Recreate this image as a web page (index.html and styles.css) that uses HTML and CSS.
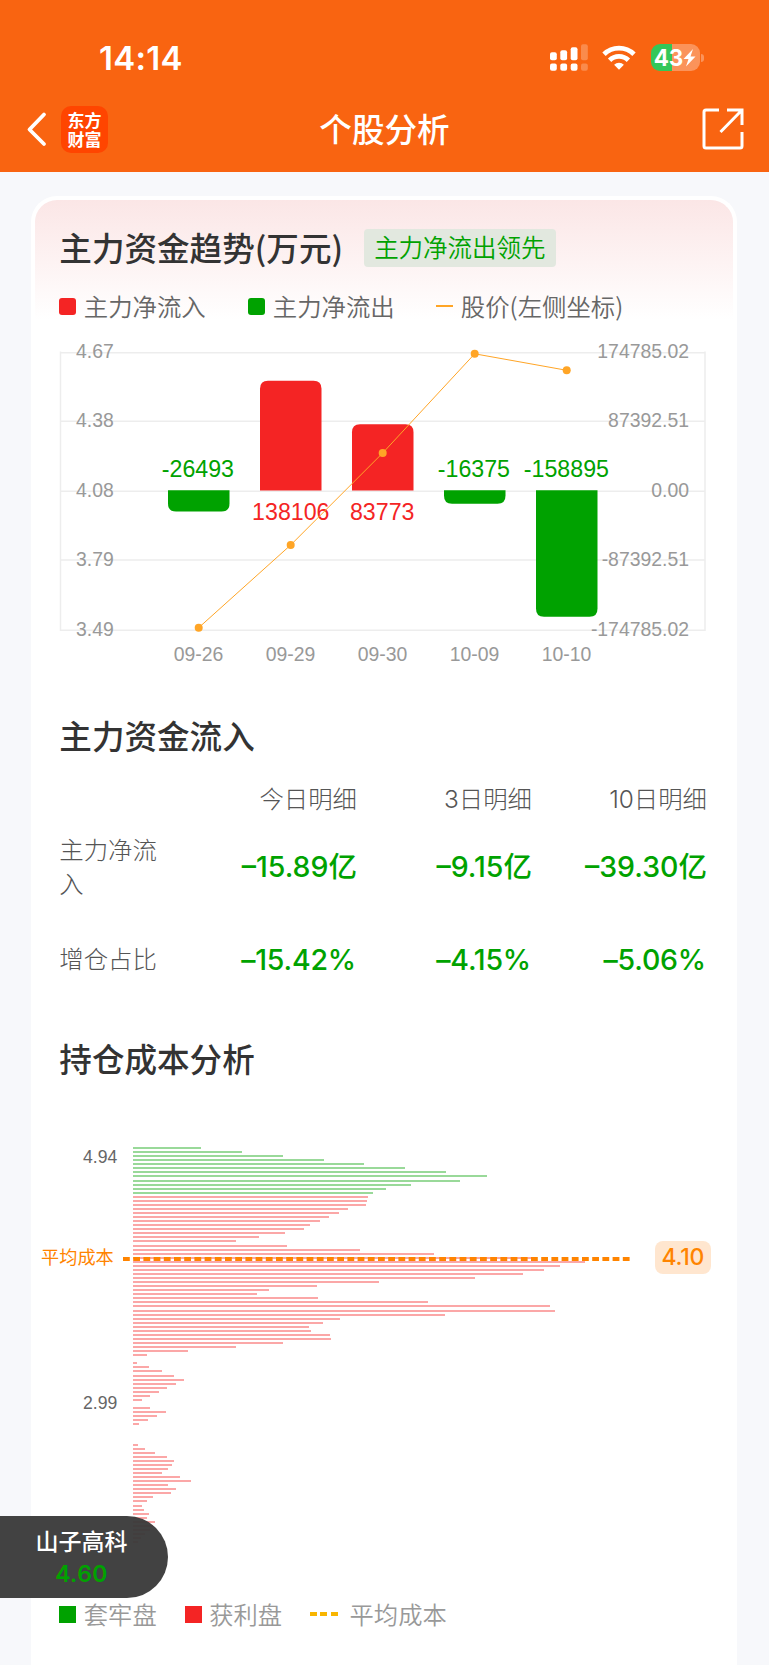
FILE: index.html
```
<!DOCTYPE html>
<html lang="zh-CN">
<head>
    <meta charset="UTF-8">
    <meta name="viewport" content="width=device-width, initial-scale=1.0">
    <title>个股分析</title>
    <link rel="stylesheet" href="styles.css">
</head>
<body>
    <header class="header">
        <div class="status-bar">
            <div class="time">14:14</div>
            <div class="status-icons">
                <svg class="signal" width="39" height="28" viewBox="0 0 39 28" fill="#fff">
                    <rect x="0" y="8.3" width="6.8" height="8" rx="2"/>
                    <rect x="10.3" y="6.3" width="6.8" height="10" rx="2"/>
                    <rect x="20.7" y="3.3" width="6.8" height="13" rx="2"/>
                    <rect x="31" y="0.3" width="6.8" height="16" rx="2" opacity=".25"/>
                    <rect x="0" y="19.5" width="6.8" height="7.3" rx="2"/>
                    <rect x="10.3" y="19.5" width="6.8" height="7.3" rx="2"/>
                    <rect x="20.7" y="19.5" width="6.8" height="7.3" rx="2"/>
                    <rect x="31" y="19.5" width="6.8" height="7.3" rx="2" opacity=".25"/>
                </svg>
                <svg class="wifi" width="34" height="28" viewBox="0 0 34 28" fill="none" stroke="#fff" stroke-width="4.8">
                    <path d="M2 10.2a21.4 21.4 0 0 1 30 0"/>
                    <path d="M7.6 16.2a13.4 13.4 0 0 1 18.8 0"/>
                    <path d="M17 25.8l-4.9-5a7 7 0 0 1 9.8 0z" fill="#fff" stroke="none"/>
                </svg>
                <div class="battery">
                    <span>43</span>
                    <svg width="13" height="18" viewBox="0 0 13 18" fill="#fff">
                        <path d="M10 0L0.5 10h5L3 17.5 12.5 7.5h-5z"/>
                    </svg>
                </div>
                <i class="battery-tip"></i>
            </div>
        </div>
        <div class="nav">
            <div class="nav-left">
                <svg width="22" height="36" viewBox="0 0 22 36" fill="none" stroke="#fff" stroke-width="3.8" stroke-linecap="round" stroke-linejoin="round">
                    <path d="M18 3.5L3.5 18.5l14.5 14.5"/>
                </svg>
                <div class="app-logo">
                    <span>东方</span>
                    <span>财富</span>
                </div>
            </div>
            <h1>个股分析</h1>
            <svg class="share" width="42" height="42" viewBox="0 0 42 42" fill="none" stroke="#fff" stroke-width="3">
                <path d="M17 2H4Q2 2 2 4v34q0 2 2 2h34q2 0 2-2V24"/>
                <path d="M25 2h15v15M39.5 2.5L18.5 24"/>
            </svg>
        </div>
    </header>

    <main class="card">
        <section class="trend">
            <div class="title-row">
                <h2>主力资金趋势(万元)</h2>
                <span class="tag">主力净流出领先</span>
            </div>
            <div class="legend">
                <span class="legend-item in"><i class="dot red"></i>主力净流入</span>
                <span class="legend-item out"><i class="dot green"></i>主力净流出</span>
                <span class="legend-item"><i class="dash"></i>股价(左侧坐标)</span>
            </div>
            <svg class="trend-chart" width="706" height="345" viewBox="0 0 706 345">
                <g class="grid">
                    <path d="M29 22.8H674M29 91.3H674M29 161.3H674M29 230.1H674M29 300.2H674"/>
                    <path d="M29.5 21.5V301M674 21.5V301"/>
                </g>
                <g class="up">
                    <path d="M229 160.5V58.7q0-8 8-8h45.5q8 0 8 8v101.8z"/>
                    <path d="M321 160.5V102.2q0-8 8-8h45.5q8 0 8 8v58.3z"/>
                </g>
                <g class="down">
                    <path d="M137 160.3v13.2q0 8 8 8h45.5q8 0 8-8v-13.2z"/>
                    <path d="M413 160.3v5.4q0 8 8 8h45.5q8 0 8-8v-5.4z"/>
                    <path d="M505 160.3v118.4q0 8 8 8h45.5q8 0 8-8V160.3z"/>
                </g>
                <g class="value down">
                    <text x="166.9" y="147.4">-26493</text>
                    <text x="442.9" y="147.4">-16375</text>
                    <text x="535.4" y="147.4">-158895</text>
                </g>
                <g class="value up">
                    <text x="259.8" y="190">138106</text>
                    <text x="351.2" y="190">83773</text>
                </g>
                <g class="axis">
                    <text x="45" y="27.6">4.67</text>
                    <text x="45" y="97">4.38</text>
                    <text x="45" y="166.6">4.08</text>
                    <text x="45" y="236.2">3.79</text>
                    <text x="45" y="305.6">3.49</text>
                </g>
                <g class="axis right">
                    <text x="658" y="27.6">174785.02</text>
                    <text x="658" y="97">87392.51</text>
                    <text x="658" y="166.6">0.00</text>
                    <text x="658" y="236.2">-87392.51</text>
                    <text x="658" y="305.6">-174785.02</text>
                </g>
                <g class="axis date">
                    <text x="167.5" y="331.4">09-26</text>
                    <text x="259.5" y="331.4">09-29</text>
                    <text x="351.5" y="331.4">09-30</text>
                    <text x="443.5" y="331.4">10-09</text>
                    <text x="535.5" y="331.4">10-10</text>
                </g>
                <polyline class="price" points="167.7,297.7 259.7,215 351.7,123 443.7,23.8 535.7,40.3"/>
                <g class="price-dots">
                    <circle cx="167.7" cy="297.7" r="4"/>
                    <circle cx="259.7" cy="215" r="4"/>
                    <circle cx="351.7" cy="123" r="4"/>
                    <circle cx="443.7" cy="23.8" r="4"/>
                    <circle cx="535.7" cy="40.3" r="4"/>
                </g>
            </svg>
        </section>

        <section class="flow">
            <h2>主力资金流入</h2>
            <div class="flow-table">
                <span></span>
                <span class="head">今日明细</span>
                <span class="head">3日明细</span>
                <span class="head">10日明细</span>

                <span class="label">主力净流入</span>
                <span class="num">–15.89<b>亿</b></span>
                <span class="num">–9.15<b>亿</b></span>
                <span class="num">–39.30<b>亿</b></span>

                <span class="label">增仓占比</span>
                <span class="num pct">–15.42%</span>
                <span class="num pct">–4.15%</span>
                <span class="num pct">–5.06%</span>
            </div>
        </section>

        <section class="cost">
            <h2>持仓成本分析</h2>
            <div class="cost-chart">
                <span class="cost-label top">4.94</span>
                <span class="cost-label mid">2.99</span>
                <div class="cost-bars" id="costBars"></div>
                <div class="average">
                    <span>平均成本</span>
                    <svg width="509" height="4" viewBox="0 0 509 4">
                        <path d="M0 2H509" stroke="#ff8400" stroke-width="4" stroke-dasharray="6.8 3.4"/>
                    </svg>
                    <span class="average-value">4.10</span>
                </div>
            </div>
            <div class="cost-legend">
                <span><i class="square green"></i>套牢盘</span>
                <span><i class="square red"></i>获利盘</span>
                <span><i class="dashes"></i>平均成本</span>
            </div>
        </section>
    </main>

    <div class="stock-float">
        <div class="stock-name">山子高科</div>
        <div class="stock-price">4.60</div>
    </div>

    <script>
        // Bar widths by price level, highest price first
        const trapped = [68, 109, 150, 191, 231, 272, 313, 354, 327, 278, 253, 240];
        const profit = [
            235, 234, 233, 215, 206, 196, 187, 177, 171, 152, 126, 103, 154,
            227, 301, 404, 452, 427, 411, 390, 342, 246, 184, 136, 124, 185,
            295, 417, 422, 312, 207, 190, 176, 178, 197, 198, 150, 103, 55, 14,
            0, 4, 16, 29, 41, 51, 43, 34, 26, 17, 9,
            0, 17, 33, 24, 15, 6, 0, 0, 0, 0,
            5, 12, 22, 34, 41, 39, 35, 29, 47, 58, 35, 43, 38, 20, 14, 9, 11, 16, 14,
            22, 20, 17, 12, 8, 5
        ];

        const costBars = document.getElementById('costBars');

        function addBars(widths, type) {
            widths.forEach((width) => {
                const bar = document.createElement('div');
                bar.className = 'bar ' + type;
                bar.style.width = width + 'px';
                costBars.appendChild(bar);
            });
        }

        addBars(trapped, 'trapped');
        addBars(profit, 'profit');
    </script>
</body>
</html>
```

FILE: styles.css
```
* {
    box-sizing: border-box;
}

body {
    margin: 0;
    height: 1665px;
    overflow: hidden;
    position: relative;
    background: #f7f8fb;
    color: #333;
    font-family: Inter, "Noto Sans CJK SC", sans-serif;
}

h1,
h2 {
    margin: 0;
    font-family: "Noto Sans CJK SC", sans-serif;
    font-size: 32.6px;
    line-height: 40px;
    font-weight: 500;
    white-space: nowrap;
}

svg {
    display: block;
}

/* header */
.header {
    height: 172px;
    background: #f96411;
    color: #fff;
}

.status-bar {
    height: 86px;
    padding: 29px 65px 0 99px;
    display: flex;
    justify-content: space-between;
    align-items: center;
}

.time {
    font-size: 33px;
    font-weight: 600;
    letter-spacing: 0.3px;
}

.status-icons {
    display: flex;
    align-items: center;
}

.wifi {
    margin: 0 14.5px 0 13px;
}

.battery {
    width: 49px;
    height: 27px;
    border-radius: 9px;
    display: flex;
    align-items: center;
    justify-content: center;
    background: linear-gradient(90deg, #34c759 0, #34c759 20.5px, #fb935a 20.5px);
    font-size: 22.5px;
    font-weight: 700;
    letter-spacing: -0.2px;
}

.battery-tip {
    width: 3px;
    height: 8px;
    margin-left: 1.5px;
    border-radius: 0 4px 4px 0;
    background: #fb935a;
}

.nav {
    height: 86px;
    padding: 0 26px;
    display: flex;
    justify-content: space-between;
    align-items: center;
}

.nav-left {
    width: 97px;
    display: flex;
    align-items: center;
    gap: 13px;
}

.nav h1 {
    flex: 1;
    margin: -3px 14px 0 -42px;
    text-align: center;
}

.share {
    margin-right: -1px;
}

.app-logo {
    width: 47px;
    height: 47px;
    border-radius: 10px;
    display: flex;
    flex-direction: column;
    align-items: center;
    justify-content: center;
    background: #ff4500;
    font-family: "Noto Sans CJK SC", sans-serif;
    font-size: 17px;
    line-height: 19.5px;
    font-weight: 700;
}

/* card */
.card {
    width: 706px;
    height: 1500px;
    margin: 24px auto 0 31px;
    border: 4px solid #fff;
    border-bottom: 0;
    border-radius: 26px 26px 0 0;
    background: linear-gradient(180deg, #fbe6e6 0, #fff 120px) #fff;
}

.card section {
    padding: 0 25px 0 24.3px;
}

.title-row {
    display: flex;
    align-items: center;
    gap: 20.5px;
    padding-top: 27px;
}

.tag {
    height: 38px;
    margin-top: 1px;
    padding: 0 10.5px;
    border-radius: 4px;
    background: #e2e8df;
    color: #00a200;
    font-family: "Noto Sans CJK SC", sans-serif;
    font-size: 24.5px;
    font-weight: 350;
    line-height: 36px;
    white-space: nowrap;
}

.legend {
    display: flex;
    height: 34px;
    margin-top: 22px;
    font-family: "Noto Sans CJK SC", sans-serif;
    font-size: 24.4px;
    font-weight: 350;
    line-height: 34px;
    color: #666;
}

.legend-item {
    display: flex;
    align-items: center;
    gap: 7.5px;
}

.legend-item.in {
    width: 189px;
}

.legend-item.out {
    width: 188px;
}

.dot {
    width: 17px;
    height: 17px;
    border-radius: 3px;
}

.dash {
    width: 17px;
    height: 2px;
    background: #ffa526;
}

.red {
    background: #f42424;
}

.green {
    background: #00a200;
}

/* trend chart */
.trend-chart {
    margin: 7px 0 0 -28.3px;
    font-family: "Liberation Sans", sans-serif;
}

.grid {
    fill: none;
    stroke: #ededed;
    stroke-width: 1.5;
}

.up {
    fill: #f42424;
}

.down {
    fill: #00a200;
}

.value {
    font-size: 23.2px;
    text-anchor: middle;
}

.axis {
    font-size: 19.4px;
    fill: #999;
}

.axis.right {
    text-anchor: end;
}

.axis.date {
    text-anchor: middle;
}

.price {
    fill: none;
    stroke: #ffa526;
    stroke-width: 1;
}

.price-dots {
    fill: #ffa526;
}

/* flow table */
.flow {
    margin-top: 40px;
}

.flow-table {
    display: grid;
    grid-template-columns: 122.7px 175px 175px 175px;
    grid-template-rows: 34px 102px 82px;
    align-items: center;
    margin-top: 27px;
    text-align: right;
}

.head,
.label {
    font-size: 24.4px;
    font-weight: 300;
    line-height: 34px;
    color: #555;
}

.label {
    width: 100px;
    text-align: left;
}

.num {
    font-size: 28.5px;
    font-weight: 500;
    line-height: 40px;
    color: #00a200;
    white-space: nowrap;
}

.num b {
    font-weight: 500;
}

.pct {
    padding-top: 1px;
    padding-right: 1px;
    letter-spacing: -0.2px;
}

/* cost distribution */
.cost {
    margin-top: 38px;
}

.cost-chart {
    height: 450px;
    margin: 69px -25px 0 -24.3px;
    padding-left: 98px;
    position: relative;
}

.cost-bars {
    display: flex;
    flex-direction: column;
    gap: 2.065px;
}

.bar {
    height: 2px;
    flex: none;
}

.trapped {
    background: #99d999;
}

.profit {
    background: #fba7a7;
}

.cost-label {
    position: absolute;
    left: 48px;
    font-family: "Liberation Sans", sans-serif;
    font-size: 17.6px;
    line-height: 20px;
    color: #666;
}

.cost-label.top {
    top: 0;
}

.cost-label.mid {
    top: 246px;
}

.average {
    position: absolute;
    top: 93.5px;
    left: 6px;
    display: flex;
    align-items: center;
    color: #ff8400;
    font-size: 18.2px;
    white-space: nowrap;
}

.average span:first-child {
    margin-top: -2px;
}

.average svg {
    margin: 3px 23px 0 9px;
}

.average-value {
    width: 56px;
    height: 33px;
    border-radius: 8px;
    background: #ffe6cf;
    font-size: 23px;
    font-weight: 500;
    line-height: 33px;
    letter-spacing: -0.3px;
    text-align: center;
}

.cost-legend {
    display: flex;
    gap: 28px;
    font-family: "Noto Sans CJK SC", sans-serif;
    font-size: 24.3px;
    font-weight: 350;
    line-height: 34px;
    color: #999;
}

.cost-legend span {
    display: flex;
    align-items: center;
}

.square {
    width: 17px;
    height: 17px;
    margin-right: 7.5px;
}

.dashes {
    width: 28px;
    height: 4px;
    margin-right: 11.5px;
    background: repeating-linear-gradient(90deg, #f8b500 0, #f8b500 7px, transparent 7px, transparent 10.3px);
}

/* floating stock */
.stock-float {
    position: absolute;
    left: 0;
    top: 1516px;
    width: 168px;
    height: 82px;
    padding: 9px 5px 0 0;
    border-radius: 0 41px 41px 0;
    background: rgba(56, 56, 56, 0.95);
    text-align: center;
}

.stock-name {
    font-family: "Noto Sans CJK SC", sans-serif;
    font-size: 23px;
    font-weight: 500;
    line-height: 31px;
    color: #fff;
}

.stock-price {
    font-size: 23px;
    font-weight: 600;
    line-height: 36px;
    letter-spacing: 0.4px;
    color: #00a200;
}
```
